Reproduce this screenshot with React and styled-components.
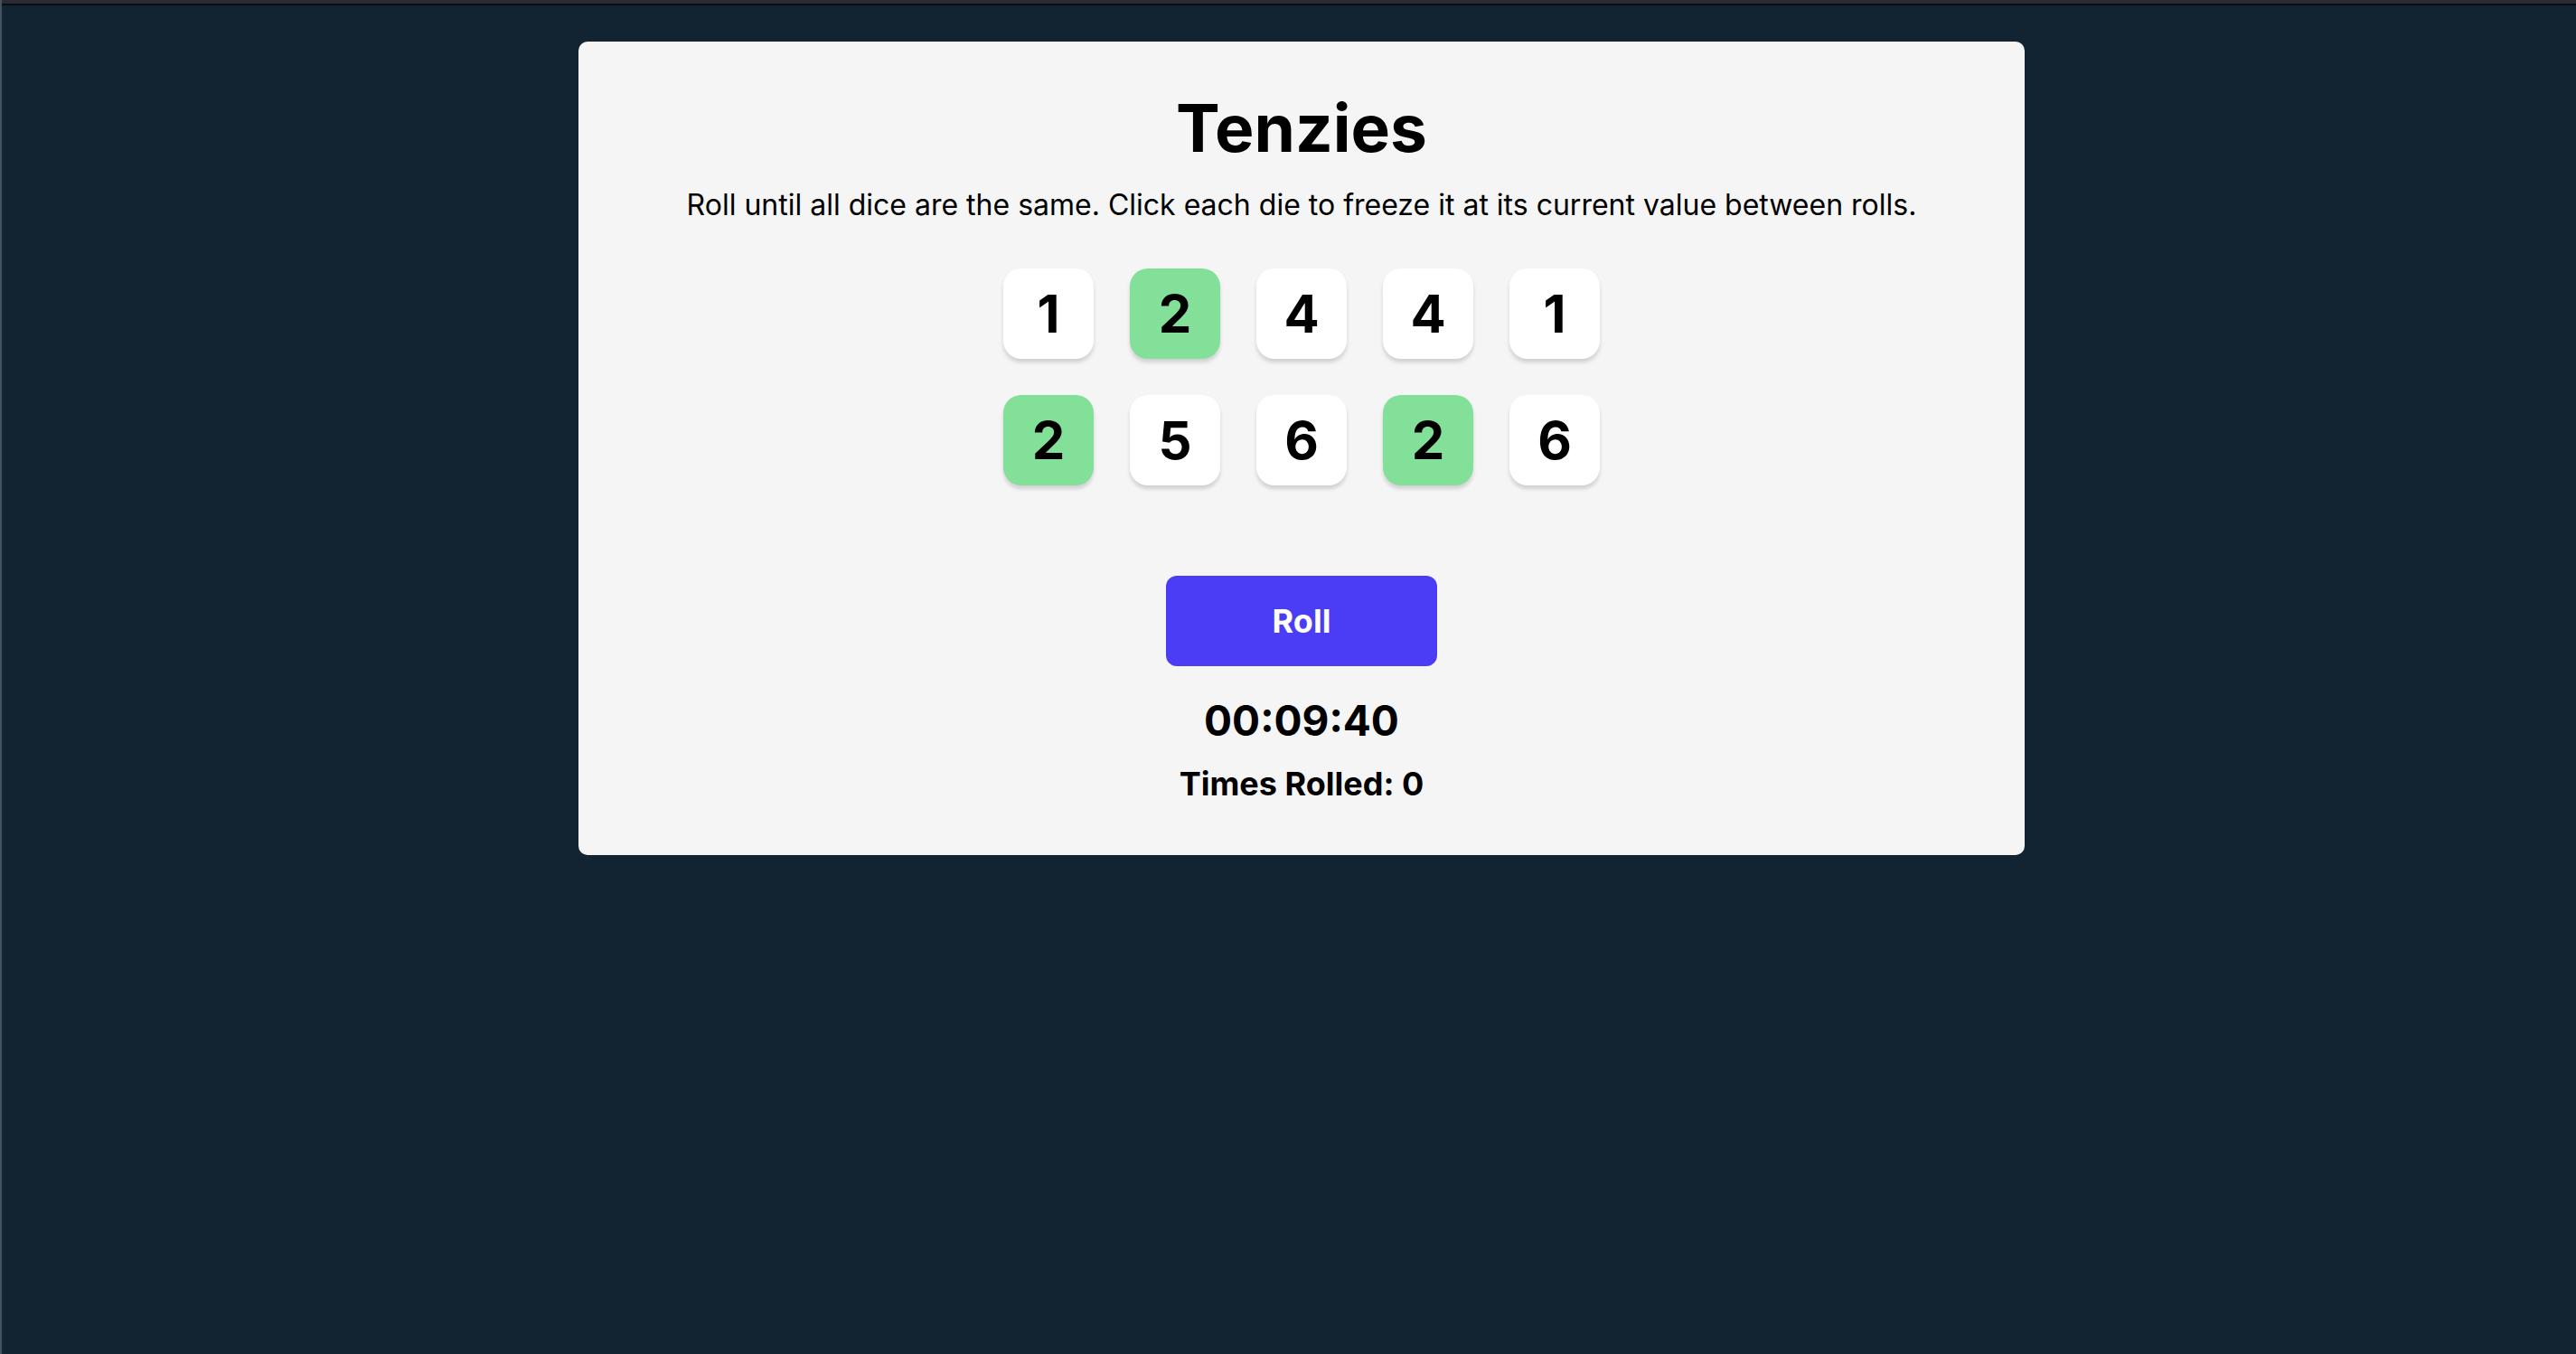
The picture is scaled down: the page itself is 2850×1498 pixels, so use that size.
import React, { useState } from "react";
import styled, { createGlobalStyle } from "styled-components";

const GlobalStyle = createGlobalStyle`
  * {
    box-sizing: border-box;
  }

  body {
    margin: 0;
    background: #122432;
    color: #000;
    font-family: Inter, "Liberation Sans", sans-serif;
  }
`;

const Page = styled.div`
  min-height: 100vh;
  border-left: 2px solid #44525d;
`;

const WindowEdge = styled.div`
  height: 6px;
  background: #2c2a33;
  border-bottom: 2px solid #0b0c0f;
`;

const Stage = styled.div`
  display: flex;
  justify-content: center;
  padding: 40px 0 40px 28px;
`;

const Card = styled.main`
  display: flex;
  flex-direction: column;
  align-items: center;
  width: 100%;
  max-width: 1600px;
  padding: 52px 40px 55px;
  border-radius: 10px;
  background: #f5f5f5;
  text-align: center;
`;

const Title = styled.h1`
  margin: 0;
  font-size: 73px;
  font-weight: 700;
  line-height: 88px;
`;

const Instructions = styled.p`
  margin: 17px 0 46px;
  font-size: 32px;
  line-height: 48px;
`;

const DiceGrid = styled.div`
  display: grid;
  grid-template-columns: repeat(5, 100px);
  gap: 40px;
`;

const Die = styled.button`
  height: 100px;
  padding: 0;
  border: 0;
  border-radius: 20px;
  background: ${({ $held }) => ($held ? "#83e098" : "#fff")};
  box-shadow: 0 4px 4px rgba(0, 0, 0, 0.15);
  color: #000;
  font-family: inherit;
  font-size: 58px;
  font-weight: 700;
  line-height: 100px;
  cursor: pointer;
`;

const RollButton = styled.button`
  width: 300px;
  height: 100px;
  margin-top: 100px;
  padding: 0;
  border: 0;
  border-radius: 12px;
  background: #4b3cf5;
  color: #fff;
  font-family: inherit;
  font-size: 36px;
  font-weight: 700;
  cursor: pointer;
`;

const Timer = styled.h2`
  margin: 30px 0 16px;
  font-size: 46px;
  font-weight: 700;
  line-height: 60px;
`;

const RollCount = styled.h3`
  margin: 0;
  font-size: 36px;
  font-weight: 700;
  line-height: 48px;
`;

const startingDice = [
  { value: 1, held: false },
  { value: 2, held: true },
  { value: 4, held: false },
  { value: 4, held: false },
  { value: 1, held: false },
  { value: 2, held: true },
  { value: 5, held: false },
  { value: 6, held: false },
  { value: 2, held: true },
  { value: 6, held: false },
];

export default function App() {
  const [dice, setDice] = useState(startingDice);
  const [rolls, setRolls] = useState(0);

  const toggle = (index) =>
    setDice((old) =>
      old.map((die, i) => (i === index ? { ...die, held: !die.held } : die))
    );

  const roll = () => {
    setDice((old) =>
      old.map((die) =>
        die.held ? die : { ...die, value: Math.ceil(Math.random() * 6) }
      )
    );
    setRolls((count) => count + 1);
  };

  return (
    <>
      <GlobalStyle />
      <Page>
        <WindowEdge />
        <Stage>
          <Card>
            <Title>Tenzies</Title>
            <Instructions>
              Roll until all dice are the same. Click each die to freeze it at
              its current value between rolls.
            </Instructions>
            <DiceGrid>
              {dice.map((die, index) => (
                <Die
                  key={index}
                  type="button"
                  $held={die.held}
                  aria-pressed={die.held}
                  onClick={() => toggle(index)}
                >
                  {die.value}
                </Die>
              ))}
            </DiceGrid>
            <RollButton type="button" onClick={roll}>
              Roll
            </RollButton>
            <Timer>00:09:40</Timer>
            <RollCount>Times Rolled: {rolls}</RollCount>
          </Card>
        </Stage>
      </Page>
    </>
  );
}
